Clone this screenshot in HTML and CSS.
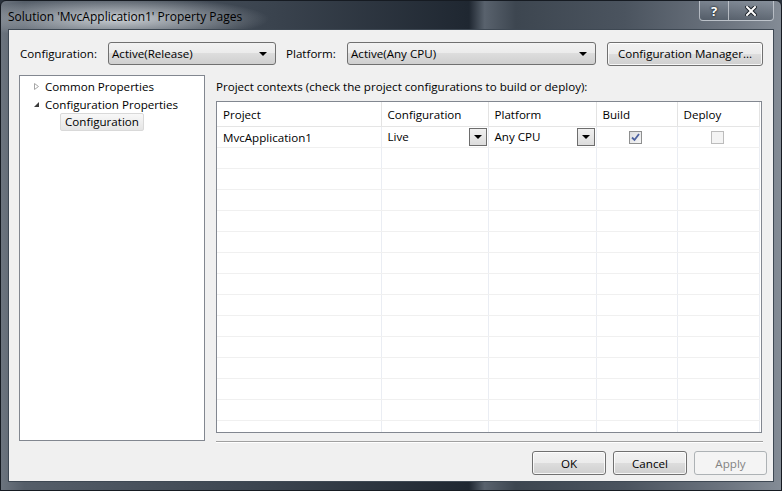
FILE: index.html
```html
<!DOCTYPE html>
<html lang="en">
<head>
    <meta charset="UTF-8">
    <title>Solution 'MvcApplication1' Property Pages</title>
    <link rel="stylesheet" href="styles.css">
</head>
<body>
    <div class="window">
        <div class="titlebar">
            <span class="title">Solution 'MvcApplication1' Property Pages</span>
            <div class="caption-btns">
                <span class="cap cap-help">?</span>
                <span class="cap cap-close">
                    <svg width="12" height="10" viewBox="0 0 12 10">
                        <path d="M2 1 L10 9 M10 1 L2 9" stroke="#1c2229" stroke-width="4" stroke-linecap="square"/>
                        <path d="M2 1 L10 9 M10 1 L2 9" stroke="#fff" stroke-width="2" stroke-linecap="square"/>
                    </svg>
                </span>
            </div>
        </div>

        <div class="client">
            <div class="toolbar">
                <span class="lbl lbl-config">Configuration:</span>
                <div class="combo combo-config"><span>Active(Release)</span><i class="arrow"></i></div>
                <span class="lbl lbl-platform">Platform:</span>
                <div class="combo combo-platform"><span>Active(Any CPU)</span><i class="arrow"></i></div>
                <button class="btn btn-manager">Configuration Manager...</button>
            </div>

            <div class="main">
                <div class="tree">
                    <div class="node">
                        <svg class="twisty" width="7" height="9" viewBox="0 0 7 9">
                            <path d="M1.5 1.5 L5.5 4.5 L1.5 7.5 Z" fill="#fff" stroke="#a6a6a6"/>
                        </svg>
                        Common Properties
                    </div>
                    <div class="node">
                        <svg class="twisty" width="7" height="9" viewBox="0 0 7 9">
                            <path d="M6 2 L6 7 L1 7 Z" fill="#3c3c3c"/>
                        </svg>
                        Configuration Properties
                    </div>
                    <div class="node child">
                        <span class="selected">Configuration</span>
                    </div>
                </div>

                <div class="pane">
                    <p class="hint">Project contexts (check the project configurations to build or deploy):</p>
                    <div class="grid">
                        <table>
                            <thead>
                                <tr>
                                    <th class="col-project">Project</th>
                                    <th class="col-config">Configuration</th>
                                    <th class="col-platform">Platform</th>
                                    <th class="col-build">Build</th>
                                    <th class="col-deploy">Deploy</th>
                                </tr>
                            </thead>
                            <tbody>
                                <tr>
                                    <td>MvcApplication1</td>
                                    <td><div class="cell-combo">Live<i class="drop"></i></div></td>
                                    <td><div class="cell-combo">Any CPU<i class="drop"></i></div></td>
                                    <td class="center"><span class="check checked">
                                        <svg width="9" height="9" viewBox="0 0 9 9">
                                            <path d="M1 4.5 L3.5 7 L8 1" fill="none" stroke="#4d62a0" stroke-width="1.8"/>
                                        </svg>
                                    </span></td>
                                    <td class="center"><span class="check disabled"></span></td>
                                </tr>
                                <tr><td></td><td></td><td></td><td></td><td></td></tr>
                                <tr><td></td><td></td><td></td><td></td><td></td></tr>
                                <tr><td></td><td></td><td></td><td></td><td></td></tr>
                                <tr><td></td><td></td><td></td><td></td><td></td></tr>
                                <tr><td></td><td></td><td></td><td></td><td></td></tr>
                                <tr><td></td><td></td><td></td><td></td><td></td></tr>
                                <tr><td></td><td></td><td></td><td></td><td></td></tr>
                                <tr><td></td><td></td><td></td><td></td><td></td></tr>
                                <tr><td></td><td></td><td></td><td></td><td></td></tr>
                                <tr><td></td><td></td><td></td><td></td><td></td></tr>
                                <tr><td></td><td></td><td></td><td></td><td></td></tr>
                                <tr><td></td><td></td><td></td><td></td><td></td></tr>
                                <tr><td></td><td></td><td></td><td></td><td></td></tr>
                                <tr class="last"><td></td><td></td><td></td><td></td><td></td></tr>
                            </tbody>
                        </table>
                    </div>
                    <div class="separator"></div>
                </div>
            </div>

            <div class="footer-btns">
                <button class="btn btn-dialog">OK</button>
                <button class="btn btn-dialog">Cancel</button>
                <button class="btn btn-dialog btn-apply" disabled>Apply</button>
            </div>
        </div>
    </div>
</body>
</html>
```

FILE: styles.css
```css
* {
    box-sizing: border-box;
}

body {
    margin: 0;
    background: #2a323c;
    font-family: "Open Sans", "Noto Sans", sans-serif;
    font-size: 11.6px;
    color: #000;
}

/* window frame (glass) */
.window {
    width: 782px;
    height: 491px;
    border: 1px solid #161b22;
    border-radius: 6px 6px 0 0;
    background:
        radial-gradient(ellipse 150px 22px at 118px 18px, rgba(225, 229, 233, 0.85), rgba(225, 229, 233, 0) 100%),
        linear-gradient(to right, #6c747e 0%, #555e69 3%, #3a434e 35%, #1f2731 60%, #59626d 62%, #3d4650 66%, #4b545f 80%, #6d7580 93%, #838b95 100%);
    display: flex;
    flex-direction: column;
    overflow: hidden;
}

.titlebar {
    height: 28px;
    display: flex;
    align-items: flex-start;
    justify-content: space-between;
}

.title {
    margin: 7px 0 0 7px;
    font-size: 12px;
    color: #000;
}

.caption-btns {
    display: flex;
    margin-right: 7px;
}

.cap {
    height: 20px;
    display: flex;
    align-items: center;
    justify-content: center;
    border: 1px solid rgba(215, 220, 226, 0.7);
    border-top: none;
    background: linear-gradient(to bottom, rgba(140, 150, 162, 0.55), rgba(70, 80, 92, 0.55));
    color: #fff;
    font-weight: bold;
    font-size: 13px;
    text-shadow: 0 0 2px #1c2229, 0 0 2px #1c2229;
}

.cap-help {
    width: 30px;
    border-radius: 0 0 0 4px;
}

.cap-close {
    width: 45px;
    border-left: none;
    border-radius: 0 0 4px 0;
}

/* dialog body */
.client {
    flex: 1;
    margin: 0 7px 8px 7px;
    background: #f0f0f0;
    border: 1px solid #3e4853;
    display: flex;
    flex-direction: column;
}

.toolbar {
    display: flex;
    align-items: center;
    margin-top: 11px;
    padding-left: 11px;
    height: 24px;
}

.lbl-config {
    width: 88px;
}

.lbl-platform {
    width: 61px;
    margin-left: 10px;
}

.combo {
    height: 23px;
    border: 1px solid #707070;
    border-radius: 3px;
    background: linear-gradient(to bottom, #f2f2f2 0%, #ebebeb 50%, #dddddd 50%, #cfcfcf 100%);
    display: flex;
    align-items: center;
    justify-content: space-between;
    padding: 0 8px 0 3px;
}

.combo-config {
    width: 168px;
}

.combo-platform {
    width: 249px;
}

.arrow {
    width: 0;
    height: 0;
    border-left: 4px solid transparent;
    border-right: 4px solid transparent;
    border-top: 4px solid #000;
    margin-top: 1px;
}

.btn {
    font-family: inherit;
    font-size: 11.6px;
    color: #000;
    height: 24px;
    border: 1px solid #707070;
    border-radius: 3px;
    background: linear-gradient(to bottom, #f2f2f2 0%, #ebebeb 50%, #dddddd 50%, #cfcfcf 100%);
    box-shadow: inset 0 0 0 1px rgba(255, 255, 255, 0.8);
    padding: 0;
}

.btn:disabled {
    border-color: #adb2b5;
    background: #f4f4f4;
    color: #838383;
    box-shadow: none;
}

.btn-manager {
    width: 156px;
    margin-left: 11px;
    margin-top: 1px;
}

/* tree + grid */
.main {
    display: flex;
    margin-top: 10px;
    padding-left: 10px;
    gap: 11px;
}

.tree {
    width: 186px;
    height: 366px;
    background: #fff;
    border: 1px solid #828790;
    padding-top: 1px;
}

.node {
    height: 18px;
    display: flex;
    align-items: center;
    padding-left: 13px;
}

.twisty {
    margin-right: 5px;
}

.node.child {
    padding-left: 40px;
}

.selected {
    display: inline-block;
    padding: 0 4px;
    height: 18px;
    line-height: 16px;
    border: 1px solid #d9d9d9;
    border-radius: 2px;
    background: linear-gradient(to bottom, #f8f8f8, #e5e5e5);
}

.pane {
    width: 547px;
}

.hint {
    margin: 4px 0 0 0;
    height: 22px;
}

.grid {
    width: 546px;
    height: 332px;
    border: 1px solid #828790;
    background: #fff;
    overflow: hidden;
}

table {
    border-collapse: collapse;
    table-layout: fixed;
    width: 542px;
}

th {
    height: 24px;
    font-weight: normal;
    text-align: left;
    padding: 2px 0 0 6px;
    border-right: 1px solid #e3e3e3;
    border-bottom: 1px solid #e5e5e5;
}

td {
    height: 21px;
    padding: 1px 0 0 6px;
    border-right: 1px solid #eaedf3;
    border-bottom: 1px solid #f0f0f0;
}

.col-project { width: 164px; }
.col-config { width: 107px; }
.col-platform { width: 108px; }
.col-build { width: 81px; }
.col-deploy { width: 82px; }

td.center {
    text-align: center;
    padding: 0 2px 0 0;
}

.cell-combo {
    display: flex;
    align-items: center;
    justify-content: space-between;
    padding-right: 1px;
    margin-top: -1px;
}

.drop {
    width: 18px;
    height: 18px;
    border: 1px solid #6d6d6d;
    background: linear-gradient(to bottom, #f0f0f0, #dcdcdc);
    position: relative;
}

.drop::after {
    content: "";
    position: absolute;
    left: 4px;
    top: 6px;
    border-left: 4px solid transparent;
    border-right: 4px solid transparent;
    border-top: 4px solid #000;
}

.check {
    display: inline-flex;
    align-items: center;
    justify-content: center;
    width: 13px;
    height: 13px;
    vertical-align: middle;
    border: 1px solid #8e8f8f;
    background: linear-gradient(135deg, #dcdde0, #f6f6f6);
}

.check.disabled {
    border-color: #bcbcbc;
    background: #f4f4f4;
}

.separator {
    margin-top: 8px;
    width: 547px;
    height: 2px;
    border-top: 1px solid #a0a0a0;
    border-bottom: 1px solid #fff;
}

.footer-btns {
    display: flex;
    justify-content: flex-end;
    gap: 7px;
    margin-top: 8px;
    padding-right: 6px;
}

.btn-dialog {
    width: 74px;
}

.btn-apply {
    width: 73px;
}
```
